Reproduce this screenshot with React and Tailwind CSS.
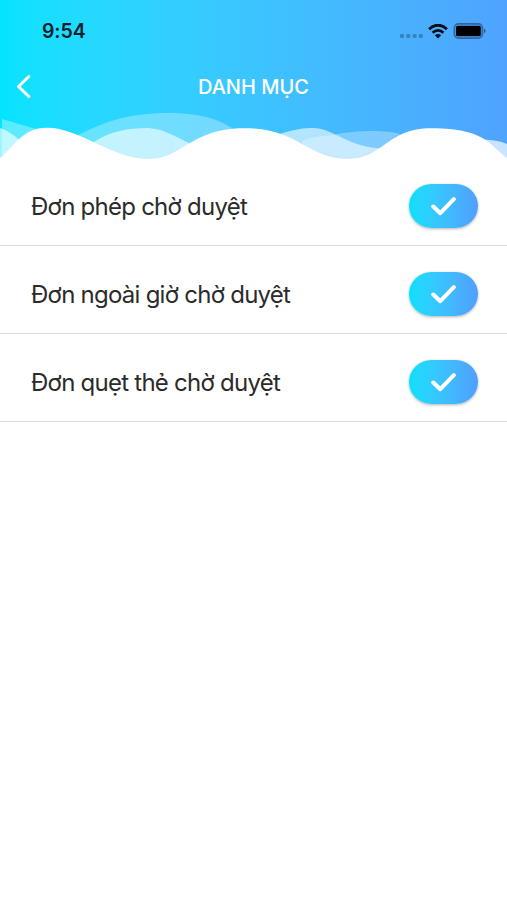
import { useState } from 'react';

const categories = [
  { id: 'leave', label: 'Đơn phép chờ duyệt' },
  { id: 'overtime', label: 'Đơn ngoài giờ chờ duyệt' },
  { id: 'timecard', label: 'Đơn quẹt thẻ chờ duyệt' },
];

function StatusBar() {
  return (
    <div className="flex h-[62px] items-center justify-between pl-[42px] pr-5">
      <span className="pt-[2px] text-[19.5px] font-semibold tracking-[-0.1px] text-[#07202b]">9:54</span>
      <div className="flex items-center">
        {/* Cellular, no signal */}
        <svg width="24" height="6" viewBox="0 0 24 6" className="mt-[10px] fill-black/25">
          <rect x="0" y="1" width="4" height="4" rx="1" />
          <rect x="6.3" y="1" width="4" height="4" rx="1" />
          <rect x="12.6" y="1" width="4" height="4" rx="1" />
          <rect x="18.9" y="1" width="4" height="4" rx="1" />
        </svg>
        {/* Wifi */}
        <svg width="20" height="15" viewBox="0 0 20 15" fill="none" stroke="#03101c" className="ml-1">
          <path d="M1.2 5.2 C6 -0.1 14 -0.1 18.8 5.2" strokeWidth="2.9" />
          <path d="M4.6 8.7 C7.7 5.5 12.3 5.5 15.4 8.7" strokeWidth="2.7" />
          <path d="M6.8 11.2 C8.6 9.5 11.4 9.5 13.2 11.2 L10 14.6 Z" fill="#03101c" stroke="none" />
        </svg>
        {/* Battery */}
        <svg width="34" height="16" viewBox="0 0 34 16" className="ml-[5px]">
          <rect x="1.4" y="0.9" width="28" height="14.2" rx="4.2" fill="none" stroke="#000" strokeOpacity="0.38" strokeWidth="1.8" />
          <rect x="3" y="2.7" width="24.8" height="10.6" rx="1.6" fill="#000" />
          <path d="M31 5.5 C33.2 6.5 33.2 9.3 31 10.3 Z" fill="#000" fillOpacity="0.42" />
        </svg>
      </div>
    </div>
  );
}

function Waves() {
  return (
    <svg viewBox="0 110 507 50" className="block h-[50px] w-full" fill="#fff">
      <path d="M2 119 C14 122 24 126 36 129 L36 160 H2 Z" fillOpacity="0.33" />
      <path d="M0 128 C7 130 13 135 20 140 V160 H0 Z" fillOpacity="0.62" />
      <path d="M76 136 C104 122 128 113 168 113 C200 113 220 119 236 131 V160 H76 Z" fillOpacity="0.3" />
      <path d="M94 142 C110 131 128 128 148 128 C166 129 176 138 192 144 V160 H94 Z" fillOpacity="0.6" />
      <path d="M280 134 C295 129 304 128 313 128 C323 128 330 132 338 136 C350 142 362 147 380 148.5 V160 H280 Z" fillOpacity="0.6" />
      <path d="M302 141 C314 136 325 136 337 134.5 C350 142 362 147 380 148.5 V160 H302 Z" fillOpacity="0.28" />
      <path d="M335 134.5 C354 130.5 386 129.5 400 134 L380 148.5 C362 147 348 142 335 134.5 Z" fillOpacity="0.3" />
      <path d="M484 139.5 C492 140 500 141 507 144 V160 H484 Z" fillOpacity="0.7" />
      <path d="M0 158 C14 147 22 127.7 47 127.7 C80 127.7 112 159 149 159 C183 159 190 128.3 245 128.3 C298 128.3 308 159 347 159 C385 159 385 128.3 432 128.3 C486 128.3 490 146 507 158 V160 H0 Z" />
    </svg>
  );
}

function Header() {
  return (
    <header className="h-40 bg-linear-to-r from-[#03e4fe] to-[#4fa3fe]">
      <StatusBar />
      <div className="grid h-12 grid-cols-[60px_1fr_60px] items-center">
        <button aria-label="Back" className="pl-4">
          <svg width="16" height="24" viewBox="0 0 16 24" fill="none" stroke="#fff" strokeWidth="3" strokeLinecap="round" strokeLinejoin="round">
            <path d="M12.8 2.5 L2.5 12.5 L12.8 22.5" />
          </svg>
        </button>
        <h1 className="pt-[1px] text-center text-[20px] font-medium tracking-[0.02px] text-white">DANH MỤC</h1>
      </div>
      <Waves />
    </header>
  );
}

function CategoryRow({ label, checked, onToggle }) {
  return (
    <li className="flex h-22 items-center justify-between border-b border-[#dcdcdc] pl-[31px] pr-[29px] pt-[9px]">
      <span className="pt-[1px] text-[24px] tracking-[-0.75px] text-[#2b2b2b]">{label}</span>
      <button
        onClick={onToggle}
        aria-pressed={checked}
        className="flex h-11 w-[69px] items-center justify-center rounded-full bg-linear-to-r from-[#05e0fc] to-[#4f9ffe] shadow-[0_1px_3px_rgba(0,0,0,0.3)]"
      >
        {checked && (
          <svg width="28" height="20" viewBox="0 0 28 20" fill="none" stroke="#fff" strokeWidth="4" strokeLinecap="round" strokeLinejoin="round">
            <path d="M3.3 10.5 L10.3 17.2 L23.8 3.2" />
          </svg>
        )}
      </button>
    </li>
  );
}

export default function App() {
  const [selected, setSelected] = useState(categories.map((c) => c.id));

  const toggle = (id) => {
    setSelected((prev) => (prev.includes(id) ? prev.filter((x) => x !== id) : [...prev, id]));
  };

  return (
    <div className="min-h-screen bg-white font-['Inter','Liberation_Sans',sans-serif]">
      <Header />
      <ul className="-mt-[2px]">
        {categories.map((category) => (
          <CategoryRow
            key={category.id}
            label={category.label}
            checked={selected.includes(category.id)}
            onToggle={() => toggle(category.id)}
          />
        ))}
      </ul>
    </div>
  );
}
